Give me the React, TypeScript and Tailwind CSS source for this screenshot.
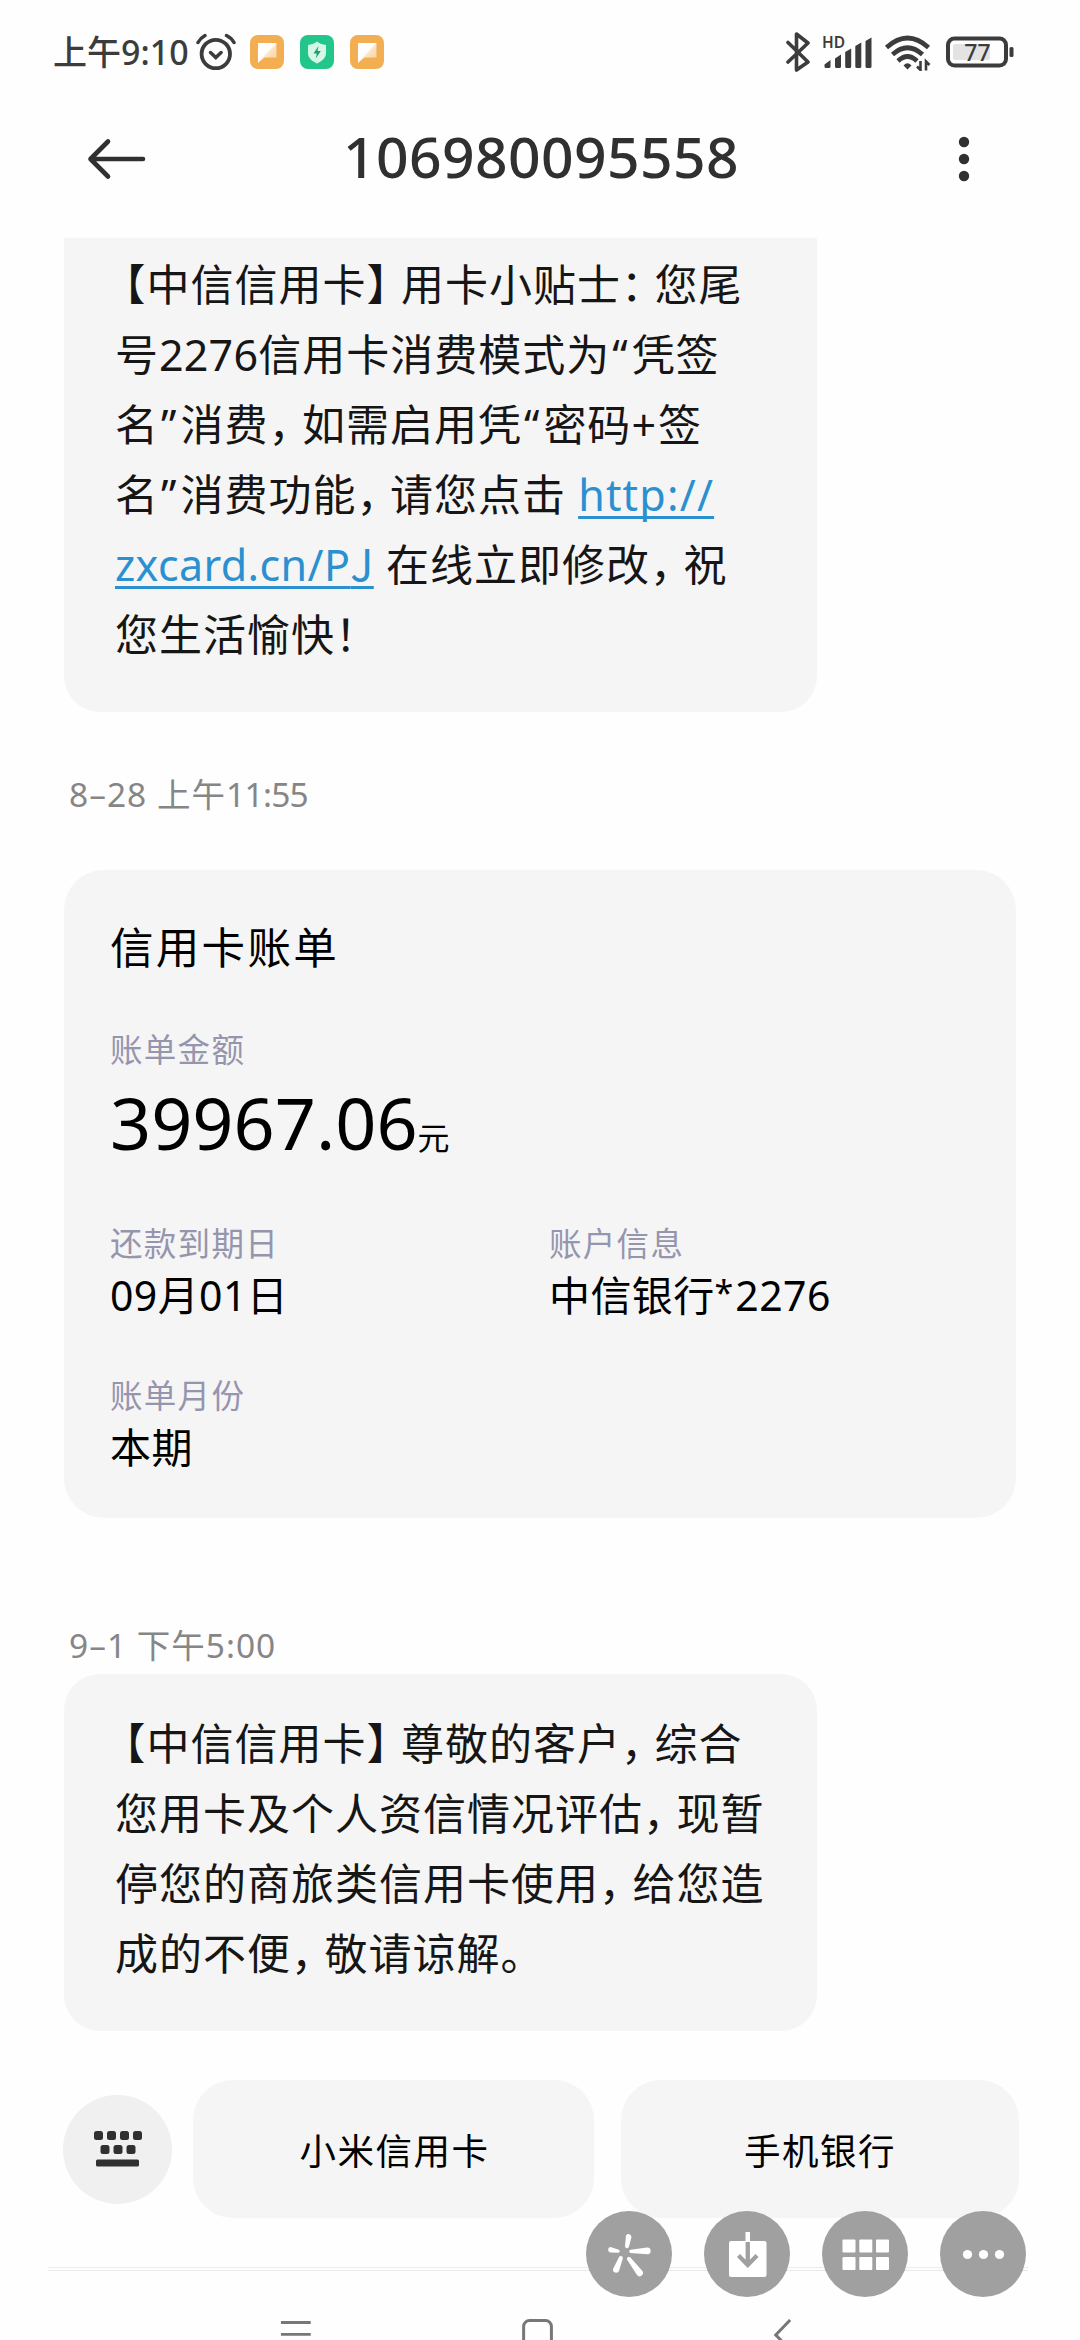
import type { ReactNode } from 'react';

const firstMessage = [
  '【中信信用卡】用卡小贴士：您尾',
  '号2276信用卡消费模式为“凭签',
  '名”消费，如需启用凭“密码+签',
  '名”消费功能，请您点击 [http://]',
  '[zxcard.cn/PJ] 在线立即修改，祝',
  '您生活愉快！',
];

const secondMessage = [
  '【中信信用卡】尊敬的客户，综合',
  '您用卡及个人资信情况评估，现暂',
  '停您的商旅类信用卡使用，给您造',
  '成的不便，敬请谅解。',
];

const getTokenClass = (token: string) => {
  if (token === '【') return "ml-[9px] [font-feature-settings:'halt']";
  if (token === '】') return "mr-[12px] [font-feature-settings:'halt']";
  if (/^[，：！。]$/.test(token)) return "mr-[11px] [font-feature-settings:'halt']";
  if (token === '“') return 'ml-[2px] tracking-[4px]';
  if (token === '”') return 'ml-[2px] tracking-[4px]';
  if (token === '+') return 'tracking-[2px]';
  if (/^[0-9]+$/.test(token)) return 'tracking-[0.2px]';
  return '';
};

// Full-width punctuation is set narrower than a character cell
function MessageLine({ text }: { text: string }) {
  const tokens = text.split(/(\[[^\]]+\]|[【】，：！。“”+]|[0-9]+)/).filter(Boolean);
  return (
    <div className="h-[70px] whitespace-pre">
      {tokens.map((token, i) =>
        token.startsWith('[') ? (
          <a key={i} className={`text-[#2b90d0] underline decoration-[2.5px] underline-offset-[5px] [text-decoration-skip-ink:none] ${token.includes('J') ? 'tracking-[0.4px]' : 'tracking-[1.2px]'}`}>
            {token.slice(1, -1).split(/(J)/).filter(Boolean).map((part) => (
              <span key={part} className={part === 'J' ? "font-['Noto_Sans_CJK_SC',sans-serif] leading-none" : ''}>{part}</span>
            ))}
          </a>
        ) : (
          <span key={i} className={getTokenClass(token)}>{token}</span>
        )
      )}
    </div>
  );
}

function Field({ label, value }: { label: string; value: ReactNode }) {
  return (
    <div>
      <div className="h-[50px] text-[32.5px] leading-[50px] tracking-[1.3px] text-[#9595ae]">{label}</div>
      <div className="h-[52px] text-[41px] leading-[52px] tracking-[0.4px] text-black">{value}</div>
    </div>
  );
}

function FloatButton({ children }: { children: ReactNode }) {
  return (
    <button className="size-[86px] rounded-full bg-[#a0a0a0]">
      <svg viewBox="0 0 86 86" className="size-[86px]" fill="#fff">{children}</svg>
    </button>
  );
}

function NoteIcon({ id }: { id: string }) {
  return (
    <svg width="34" height="34" viewBox="0 0 34 34">
      <defs>
        <linearGradient id={id} x1="0" y1="0" x2="1" y2="1">
          <stop offset="0" stopColor="#fff" />
          <stop offset="0.45" stopColor="#fff" />
          <stop offset="0.55" stopColor="#fbe3c0" />
          <stop offset="1" stopColor="#f8cf97" />
        </linearGradient>
      </defs>
      <rect width="34" height="34" rx="8" fill="#f3ae52" />
      <path d="M8 8h18.500v14.500H14.500L8 28z" fill={`url(#${id})`} />
    </svg>
  );
}

function StatusBar() {
  return (
    <div className="flex h-[104px] items-center pl-[53px] text-[#3c3c3c]">
      <span className="w-[143px] whitespace-nowrap text-[34px] font-medium leading-[50px]">上午9:10</span>
      <svg width="40" height="38" viewBox="0 0 40 38" fill="none" stroke="currentColor" strokeLinecap="round">
        <circle cx="19.800" cy="21" r="14.200" strokeWidth="3.800" />
        <path d="M14.500 19.500l5.300 5 5.300-5" strokeWidth="3.500" />
        <path d="M2 9.500Q4.500 5 9 2.500M30.500 2.500Q35.500 5 38 9.500" strokeWidth="3.500" />
      </svg>
      <div className="ml-[14px] flex gap-4">
        <NoteIcon id="note-a" />
        <svg width="34" height="34" viewBox="0 0 34 34">
          <rect width="34" height="34" rx="8" fill="#22c68a" />
          <path d="M17 6.500c3 2.500 5.500 3 9 3.500v8c0 5-4 8-9 10.500-5-2.500-9-5.500-9-10.500v-8c3.500-.5 6-1 9-3.500z" fill="#d5f7ea" />
          <path d="M18.500 11l-5 7.500h3.300l-1 5 5-7.500h-3.300z" fill="#219b70" />
        </svg>
        <NoteIcon id="note-b" />
      </div>
      <svg className="ml-[402px]" width="24" height="40" viewBox="0 0 24 40" fill="none" stroke="currentColor" strokeWidth="3.600" strokeLinecap="round" strokeLinejoin="round">
        <path d="M2 10.500L22 30 10.500 38V2L22 11 2 30" />
      </svg>
      <div className="relative ml-[12px] h-[34px] w-[52px]">
        <span className="absolute -top-[3px] left-0 text-[15.500px] font-semibold leading-[20px]">HD</span>
        <svg width="52" height="34" viewBox="0 0 52 34" fill="currentColor">
          <path d="M2.500 29.500l6-4.500v6.500a1.500 1.500 0 01-1.500 1.500h-3a1.500 1.500 0 01-1.500-1.500zM13 23.500l6-4V31.500a1.500 1.500 0 01-1.500 1.500h-3a1.500 1.500 0 01-1.500-1.500zM23.200 17l6-3.500v18a1.500 1.500 0 01-1.500 1.500h-3a1.500 1.500 0 01-1.500-1.500zM33.300 11l6-3.500v24a1.500 1.500 0 01-1.500 1.500h-3a1.500 1.500 0 01-1.500-1.500zM43.500 6l6-3.500v29a1.500 1.500 0 01-1.500 1.500h-3a1.500 1.500 0 01-1.500-1.500z" />
        </svg>
      </div>
      <svg className="ml-[10px]" width="48" height="38" viewBox="0 0 48 38" fill="none" stroke="currentColor" strokeWidth="4.600">
        <path d="M2.500 14.500Q23.500-4.500 44.500 14.500M8.500 21.500Q23.500 8 38.500 21.500M14 28Q23.500 19 33 28" />
        <path d="M19.500 32.500Q23.500 28 27.500 32.500L23.500 36.500z" fill="currentColor" stroke="none" />
        <path d="M36.500 28v9l-3.500-3.500M42 37.500v-9l3.500 3.500" strokeWidth="2.600" />
      </svg>
      <svg className="ml-[14px]" width="70" height="32" viewBox="0 0 70 32">
        <rect x="2" y="2.500" width="58" height="27" rx="6.500" fill="none" stroke="currentColor" strokeWidth="4" />
        <rect x="7" y="8" width="37" height="16" rx="2" fill="#e3e3e3" />
        <rect x="63.500" y="11" width="4" height="10" rx="1.500" fill="currentColor" />
        <text x="31.500" y="24.500" textAnchor="middle" fontSize="23" fontWeight="500" fill="currentColor">77</text>
      </svg>
    </div>
  );
}

export default function App() {
  return (
    <div className="relative flex h-[2340px] w-[1080px] flex-col overflow-hidden bg-[#fefefe] font-['Noto_Sans','Noto_Sans_CJK_SC',sans-serif]">
      <StatusBar />

      {/* Header */}
      <div className="flex h-[136px] items-start pl-[87px]">
        <svg className="mt-[35px]" width="60" height="42" viewBox="0 0 60 42" fill="none" stroke="#303030" strokeWidth="4.600" strokeLinecap="round" strokeLinejoin="round">
          <path d="M56 21H3.500M21 3.500L3.500 21 21 38.500" />
        </svg>
        <h1 className="ml-[196px] mt-[16px] w-[400px] whitespace-nowrap text-[57px] font-medium leading-[74px] tracking-[0.4px] text-[#303030]">106980095558</h1>
        <svg className="ml-[215px] mt-[32px]" width="12" height="48" viewBox="0 0 12 48" fill="#303030">
          <circle cx="6" cy="7" r="5.200" />
          <circle cx="6" cy="24" r="5.200" />
          <circle cx="6" cy="41" r="5.200" />
        </svg>
      </div>

      {/* Messages */}
      <div className="px-16 text-[#161616]">
        <div className="h-[474px] w-[753px] rounded-b-[36px] bg-[#f5f5f5] pl-[51px] pt-[12px] text-[43px] leading-[70px] tracking-[1px]">
          {firstMessage.map((line) => <MessageLine key={line} text={line} />)}
        </div>

        <div className="mt-[57px] h-[50px] pl-[5px] text-[33.500px] leading-[50px] tracking-[1px] text-[#868686]">
          8–28 上午<span className="tracking-[-0.700px]">11:55</span>
        </div>

        <div className="mt-[51px] h-[648px] w-[952px] rounded-[40px] bg-[#f5f5f5] pl-[46px] pt-[47px]">
          <div className="h-[60px] text-[43.500px] leading-[60px] tracking-[2.300px] text-black">信用卡账单</div>
          <div className="mt-[48px] h-[50px] text-[32.500px] leading-[50px] tracking-[1.300px] text-[#9595ae]">账单金额</div>
          <div className="flex h-[90px] items-baseline text-black">
            <span className="text-[72px] leading-[94px]">39967.06</span>
            <span className="text-[32px]">元</span>
          </div>
          <div className="mt-[54px] grid grid-cols-[439px_1fr] gap-y-[50px]">
            <Field label="还款到期日" value="09月01日" />
            <Field label="账户信息" value={<>中信银行<span className="relative -top-[6px] text-[34px] tracking-[2px]">*</span>2276</>} />
            <Field label="账单月份" value="本期" />
          </div>
        </div>

        <div className="mt-[102px] h-[50px] pl-[5px] text-[33.500px] leading-[50px] tracking-[1px] text-[#868686]">9–1 下午5:00</div>

        <div className="mt-[4px] h-[357px] w-[753px] rounded-[36px] bg-[#f5f5f5] pl-[51px] pt-[35px] text-[43px] leading-[70px] tracking-[1px]">
          {secondMessage.map((line) => <MessageLine key={line} text={line} />)}
        </div>
      </div>

      {/* Quick actions */}
      <div className="mt-[49px] flex items-center pl-[63px] text-[36.500px] tracking-[1.500px] text-black">
        <button className="flex size-[109px] items-center justify-center rounded-full bg-[#f0f0f0]">
          <svg width="50" height="36" viewBox="0 0 50 36" fill="#303030">
            {[1, 14, 27, 40].map((x) => <rect key={x} x={x} y="0" width="9" height="9" rx="2.500" />)}
            {[7.500, 20.500, 33.500].map((x) => <rect key={x} x={x} y="14" width="9" height="9" rx="2.500" />)}
            <rect x="3" y="28.500" width="43" height="7" rx="1.500" />
          </svg>
        </button>
        <button className="ml-[21px] h-[138px] w-[401px] rounded-[40px] bg-[#f5f5f5] pb-[1px] pl-[2px] pt-[6px]">小米信用卡</button>
        <button className="ml-[27px] h-[138px] w-[398px] rounded-[40px] bg-[#f5f5f5] pb-[1px] pt-[6px]">手机银行</button>
      </div>
      <div className="ml-[48px] mt-[49px] h-[4px] w-[980px] border-y border-[#ebebeb]" />

      {/* Navigation bar */}
      <svg className="mt-[48px]" width="1080" height="21" viewBox="0 0 1080 21" fill="none" stroke="#777" strokeWidth="3">
        <path d="M279 3.500h30M279 15.500h30" />
        <rect x="523.500" y="1.500" width="28" height="30" rx="6" />
        <path d="M792 1L777.500 16 792 31" />
      </svg>

      {/* Floating toolbar */}
      <div className="absolute left-[586px] top-[2211px] flex gap-8">
        <FloatButton>
          <path d="M40 24.500a3 3 0 015.500 1.500l-2.500 9.500a2 2 0 01-4-.5zM24.500 36a2.800 2.800 0 00-.2 5.500l7.500.2a1.600 1.600 0 001-3zM61 36.500a3.300 3.300 0 01.5 6.800l-17-1.300a1.700 1.700 0 010-3.300zM32.800 46.500a2 2 0 014 1l-3.800 12.500a3.200 3.200 0 01-6-2zM41 48.500a2 2 0 013.200-2.200l12 13.500a3.200 3.200 0 01-5.200 4.200z" />
        </FloatButton>
        <FloatButton>
          <path d="M41.500 21h4.500v10H41.500z" />
          <rect x="25" y="30" width="37.500" height="36" rx="2" />
          <path d="M43.750 31v23M34.500 44.500l9.250 9.500 9.250-9.500" fill="none" stroke="#a0a0a0" strokeWidth="4.300" />
        </FloatButton>
        <FloatButton>
          {[28.500, 46].map((y) => [20.500, 37.300, 54].map((x) => <rect key={`${x}-${y}`} x={x} y={y} width="13" height="13" rx="1" />))}
        </FloatButton>
        <FloatButton>
          {[27.500, 43.500, 59.500].map((x) => <circle key={x} cx={x} cy="43.500" r="4.600" />)}
        </FloatButton>
      </div>
    </div>
  );
}
